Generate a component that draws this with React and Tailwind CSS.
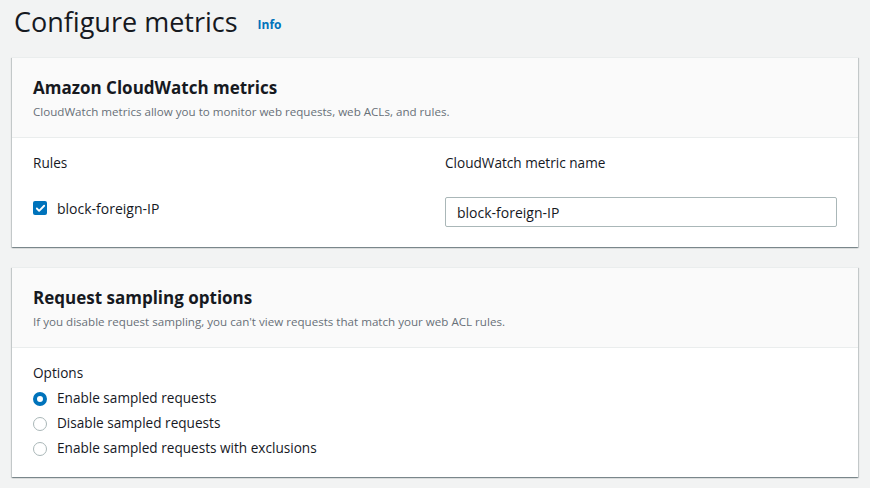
import { Check } from "lucide-react";

function CardHeader({ title, description }) {
  return (
    <div className="bg-[#fafafa] border-b border-[#eaeded] px-[21px] pt-[18px] pb-[17px]">
      <h2 className="text-[17px] leading-[24px] font-bold text-[#16191f]">{title}</h2>
      <p className="text-[11.6px] leading-[16px] text-[#687078] mt-[4px]">{description}</p>
    </div>
  );
}

function Radio({ checked, label }) {
  return (
    <label className="flex items-center h-[25px]">
      {checked ? (
        <span className="w-[14px] h-[14px] rounded-full border-[4px] border-[#0073bb] bg-white" />
      ) : (
        <span className="w-[14px] h-[14px] rounded-full border-[1.5px] border-[#aab7b8] bg-white" />
      )}
      <span className="ml-[10px] text-[13.6px] text-[#16191f]">{label}</span>
    </label>
  );
}

const cardClass =
  "mx-[12px] bg-white border-t border-[#eaeded] shadow-[0_1px_1px_0_rgba(0,28,36,0.3),1px_1px_1px_0_rgba(0,28,36,0.15),-1px_1px_1px_0_rgba(0,28,36,0.15)]";

export default function App() {
  return (
    <div
      className="w-[870px] h-[488px] bg-[#f2f3f3] overflow-hidden"
      style={{ fontFamily: '"Open Sans", "Noto Sans", sans-serif' }}
    >
      <div className="flex items-end px-[14px] pt-[2px]">
        <h1 className="text-[27px] leading-[40px] text-[#16191f]">Configure metrics</h1>
        <a className="ml-[20px] mb-[8px] text-[12px] font-bold text-[#0073bb]">Info</a>
      </div>

      <div className={cardClass + " mt-[15px]"}>
        <CardHeader
          title="Amazon CloudWatch metrics"
          description="CloudWatch metrics allow you to monitor web requests, web ACLs, and rules."
        />
        <div className="grid grid-cols-2 gap-x-[20px] px-[21px] pt-[14px] pb-[20px]">
          <div>
            <div className="text-[13.6px] leading-[22px] text-[#16191f]">Rules</div>
            <div className="flex items-center mt-[19px] h-[30px]">
              <span className="w-[14px] h-[14px] rounded-[2px] bg-[#0073bb] flex items-center justify-center">
                <Check className="w-[11px] h-[11px] text-white" strokeWidth={4} />
              </span>
              <span className="ml-[10px] text-[14px] text-[#16191f]">block-foreign-IP</span>
            </div>
          </div>
          <div>
            <div className="text-[13.6px] leading-[22px] text-[#16191f]">CloudWatch metric name</div>
            <div className="mt-[23px] h-[30px] w-full border border-[#aab7b8] rounded-[2px] flex items-center px-[11px] text-[14px] text-[#16191f]">
              block-foreign-IP
            </div>
          </div>
        </div>
      </div>

      <div className={cardClass + " mt-[20px]"}>
        <CardHeader
          title="Request sampling options"
          description="If you disable request sampling, you can't view requests that match your web ACL rules."
        />
        <div className="px-[21px] pt-[14px] pb-[16px]">
          <div className="text-[13.6px] leading-[22px] text-[#16191f]">Options</div>
          <div className="mt-[2px]">
            <Radio checked label="Enable sampled requests" />
            <Radio label="Disable sampled requests" />
            <Radio label="Enable sampled requests with exclusions" />
          </div>
        </div>
      </div>
    </div>
  );
}
